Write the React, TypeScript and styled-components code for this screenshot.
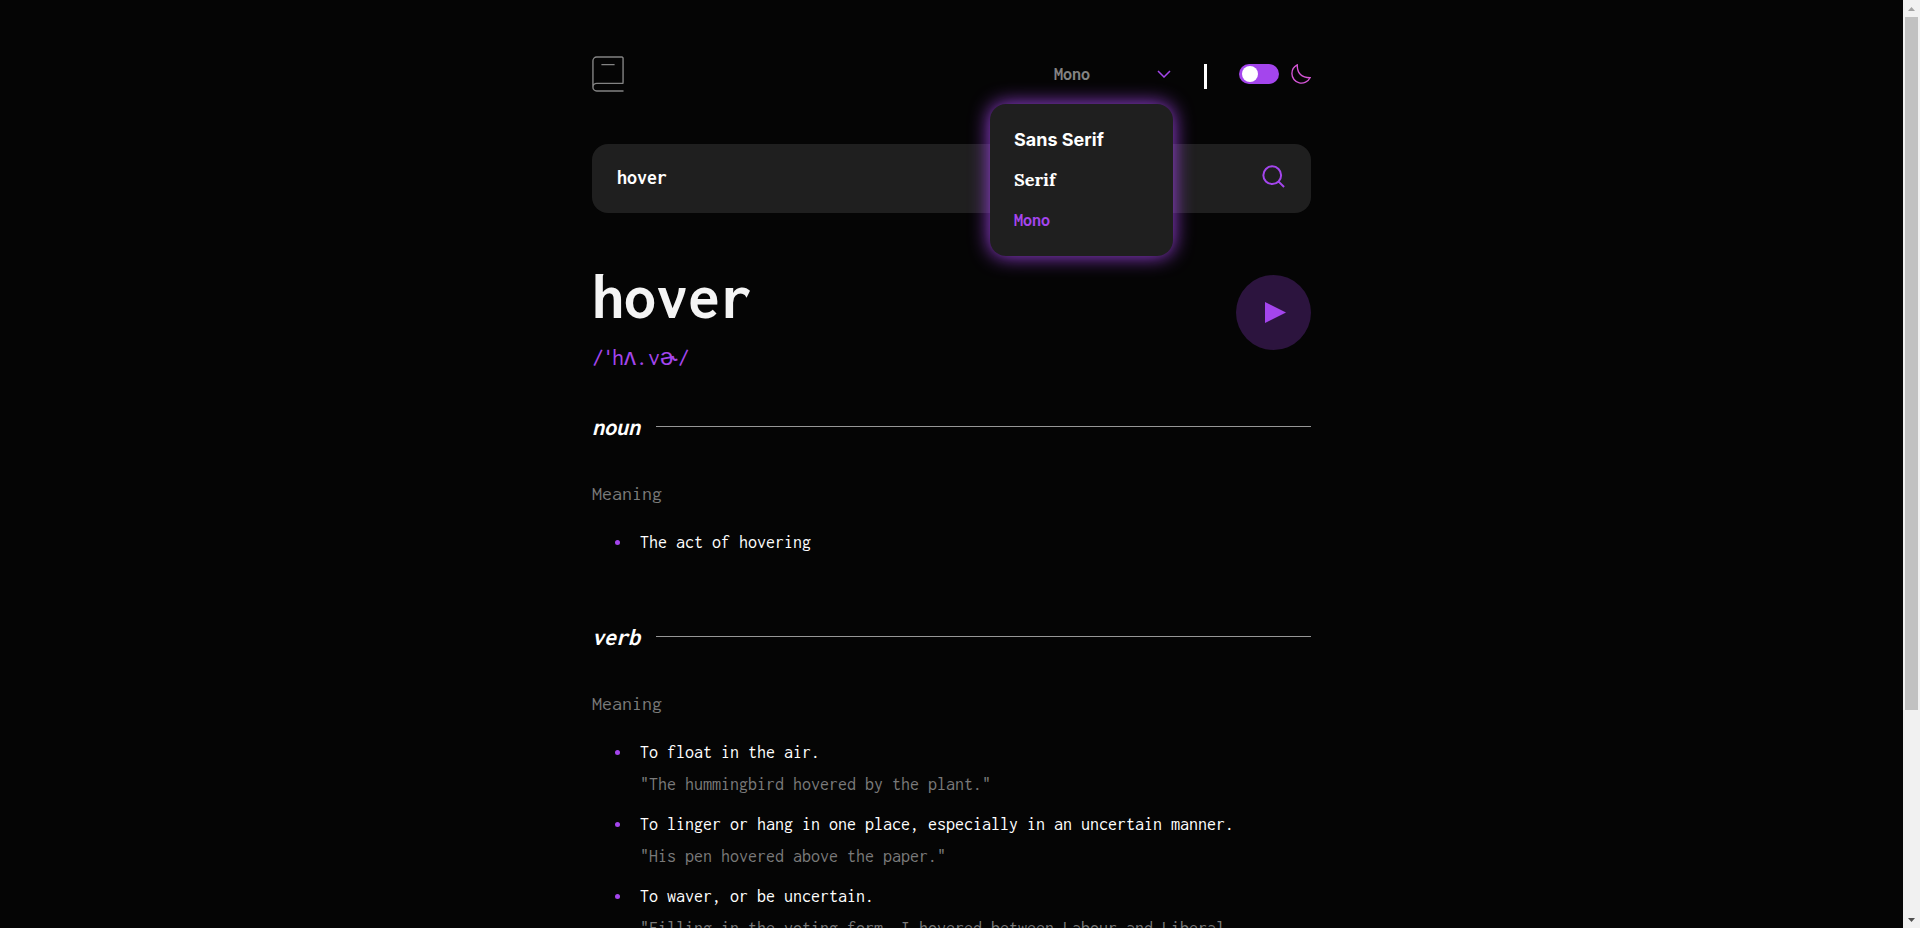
import React from "react";
import styled, { createGlobalStyle } from "styled-components";

const mono = `Inconsolata, "DejaVu Sans Mono", "Liberation Mono", monospace`;
const purple = "#a445ed";

const GlobalStyle = createGlobalStyle`
  * { box-sizing: border-box; margin: 0; padding: 0; }
  body { background: #050505; color: #fff; font-family: ${mono}; overflow: hidden; }
  svg { display: block; }
`;

const Page = styled.div`
  display: grid;
  grid-template-columns: 1fr 17px;
  height: 928px;
  overflow: hidden;
`;

const Container = styled.main`
  width: 719px;
  height: 928px;
  margin: 0 auto;
  padding-top: 54px;
`;

const Header = styled.header`
  display: flex;
  justify-content: space-between;
  align-items: center;
  height: 40px;
`;

const Controls = styled.div`
  display: flex;
  align-items: center;
`;

const FontPicker = styled.div`
  position: relative;
  display: flex;
  align-items: center;
  justify-content: space-between;
  width: 118px;
  margin-right: 33px;
  padding-left: 1px;
`;

const Label = styled.span`
  font: 700 18px/24px ${mono};
  color: #838383;
`;

const Menu = styled.ul`
  position: absolute;
  z-index: 2;
  top: 42px;
  left: -63px;
  width: 183px;
  height: 152px;
  padding: 16px 24px;
  list-style: none;
  background: #1f1f1f;
  border-radius: 16px;
  box-shadow: 0 0 20px ${purple};
`;

const Option = styled.li<{ $font: string; $active?: boolean }>`
  height: 40px;
  font: 700 18px/40px ${(p) => p.$font};
  color: ${(p) => (p.$active ? purple : "#fff")};
`;

const Divider = styled.span`
  width: 3px;
  height: 25px;
  margin: 5px 32px 0 0;
  background: #fff;
`;

const Toggle = styled.span`
  display: flex;
  width: 40px;
  height: 20px;
  margin-right: 12px;
  padding: 2px 3px;
  border-radius: 10px;
  background: ${purple};
  &::before {
    content: "";
    width: 16px;
    height: 16px;
    border-radius: 50%;
    background: #fff;
  }
`;

const SearchBar = styled.div`
  display: flex;
  align-items: center;
  justify-content: space-between;
  height: 69px;
  margin-top: 50px;
  padding: 0 25px 3px;
  border-radius: 16px;
  background: #1f1f1f;
`;

const Query = styled.span`
  padding-top: 2px;
  font: 700 20px/24px ${mono};
`;

const WordRow = styled.section`
  display: flex;
  justify-content: space-between;
  align-items: flex-start;
  height: 198px;
  padding-top: 62px;
`;

const Word = styled.h1`
  margin-top: -13px;
  font: 700 64px/70px ${mono};
  color: #f4f4f4;
`;

const Phonetic = styled.p`
  margin-top: 10px;
  font: 400 24px/30px Inconsolata, "Liberation Sans", sans-serif;
  color: ${purple};
`;

const Stress = styled.span`
  margin: 0 -2px 0 -2px;
`;

const Entry = styled.section`
  height: 210px;
`;

const PartOfSpeech = styled.div`
  display: flex;
  align-items: center;
  gap: 16px;
  height: 30px;
  &::after {
    content: "";
    flex: 1;
    height: 1px;
    background: #979797;
  }
`;

const PartName = styled.h2`
  width: 48px;
  font: italic 700 24px/30px ${mono};
  padding-top: 2px;
  white-space: nowrap;
`;

const Meaning = styled.h3`
  margin-top: 41px;
  font: 400 20px/24px ${mono};
  color: #7a7a7a;
`;

const Definitions = styled.ul`
  margin-top: 24px;
  padding-left: 48px;
  list-style: none;
`;

const Definition = styled.li`
  display: grid;
  row-gap: 8px;
  margin-bottom: 16px;
  font: 400 18px/24px ${mono};
`;

const Sense = styled.p`
  display: flex;
  align-items: center;
  white-space: pre;
  &::before {
    content: "";
    width: 5px;
    height: 5px;
    margin: 0 20px 0 -25px;
    border-radius: 50%;
    background: ${purple};
  }
`;

const Example = styled.p`
  color: #7a7a7a;
`;

const ScrollTrack = styled.aside`
  display: flex;
  flex-direction: column;
  align-items: center;
  background: #f1f1f1;
`;

const ScrollThumb = styled.div`
  width: 13px;
  height: 693px;
  background: #c1c1c1;
`;

const ScrollArrow = styled.div<{ $down?: boolean }>`
  display: flex;
  justify-content: center;
  align-items: center;
  height: 17px;
  margin-top: ${(p) => (p.$down ? "auto" : "0")};
`;

const entries = [
  { part: "noun", senses: [["The act of hovering"]] },
  {
    part: "verb",
    senses: [
      ["To float in the air.", '"The hummingbird hovered by the plant."'],
      ["To linger or hang in one place, especially in an uncertain manner.", '"His pen hovered above the paper."'],
      ["To waver, or be uncertain.", '"Filling in the voting form, I hovered between Labour and Liberal'],
    ],
  },
];

export default function App() {
  return (
    <>
      <GlobalStyle />
      <Page>
        <Container>
          <Header>
            <svg width="32" height="36" viewBox="0 0 34 38" fill="none" stroke="#838383" strokeWidth="1.5">
              <path d="M1 33V5a4 4 0 0 1 4-4h26.8A1.2 1.2 0 0 1 33 2.2v26.228M5 29h28.5M5 37h28.5M5 37a4 4 0 1 1 0-8M10 9h14" />
            </svg>
            <Controls>
              <FontPicker>
                <Label>Mono</Label>
                <svg width="14" height="8" viewBox="0 0 14 8" fill="none" stroke={purple} strokeWidth="1.5">
                  <path d="m1 1 6 6 6-6" />
                </svg>
                <Menu>
                  <Option $font={`Inter, sans-serif`}>Sans Serif</Option>
                  <Option $font={`Lora, "Liberation Serif", serif`}>Serif</Option>
                  <Option $font={mono} $active>Mono</Option>
                </Menu>
              </FontPicker>
              <Divider />
              <Toggle />
              <svg width="20" height="20" viewBox="0 0 22 22" fill="none" stroke="#d655d8" strokeWidth="1.5">
                <path d="M1 10.449a10.544 10.544 0 0 0 19.993 4.686C11.544 15.135 6.858 10.448 6.858 1A10.545 10.545 0 0 0 1 10.449Z" />
              </svg>
            </Controls>
          </Header>
          <SearchBar>
            <Query>hover</Query>
            <svg width="24" height="24" viewBox="0 0 18 18" fill="none" stroke={purple} strokeWidth="1.5">
              <path d="m12.663 12.663 3.887 3.887M1 7.664a6.665 6.665 0 1 0 13.33 0 6.665 6.665 0 0 0-13.33 0Z" />
            </svg>
          </SearchBar>
          <WordRow>
            <div>
              <Word>hover</Word>
              <Phonetic>/<Stress>ˈ</Stress>hʌ.vɚ/</Phonetic>
            </div>
            <svg width="75" height="75" viewBox="0 0 75 75" fill={purple}>
              <circle cx="37.5" cy="37.5" r="37.5" opacity=".25" />
              <path d="M29 27v21l21-10.5z" />
            </svg>
          </WordRow>
          {entries.map((entry) => (
            <Entry key={entry.part}>
              <PartOfSpeech>
                <PartName>{entry.part}</PartName>
              </PartOfSpeech>
              <Meaning>Meaning</Meaning>
              <Definitions>
                {entry.senses.map(([sense, example]) => (
                  <Definition key={sense}>
                    <Sense>{sense}</Sense>
                    {example && <Example>{example}</Example>}
                  </Definition>
                ))}
              </Definitions>
            </Entry>
          ))}
        </Container>
        <ScrollTrack>
          <ScrollArrow>
            <svg width="7" height="4" viewBox="0 0 7 4"><path d="M3.5 0 7 4H0z" fill="#a3a3a3" /></svg>
          </ScrollArrow>
          <ScrollThumb />
          <ScrollArrow $down>
            <svg width="7" height="4" viewBox="0 0 7 4"><path d="M0 0h7L3.5 4z" fill="#505050" /></svg>
          </ScrollArrow>
        </ScrollTrack>
      </Page>
    </>
  );
}
